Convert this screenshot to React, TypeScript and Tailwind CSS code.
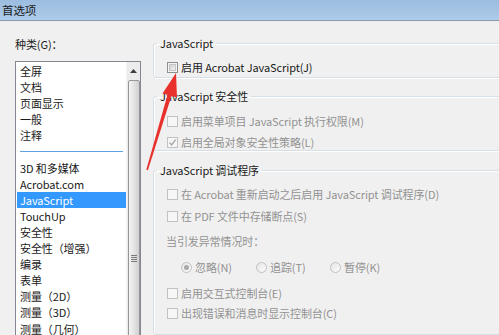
import React from 'react';

const CATEGORIES: (string | null)[] = [
  '全屏',
  '文档',
  '页面显示',
  '一般',
  '注释',
  null,
  '3D 和多媒体',
  'Acrobat.com',
  'JavaScript',
  'TouchUp',
  '安全性',
  '安全性（增强）',
  '编录',
  '表单',
  '测量（2D）',
  '测量（3D）',
  '测量（几何）',
];

function CheckBox({ checked = false, disabled = false }: { checked?: boolean; disabled?: boolean }) {
  return (
    <span
      className={[
        'relative w-[11px] h-[11px] shrink-0 border flex items-center justify-center',
        disabled ? 'border-[#c2c2c2] bg-[#f6f6f6]' : 'border-[#8e8f8f] bg-[#f4f4f4]',
      ].join(' ')}
    >
      {!disabled && (
        <span className="w-[7px] h-[7px] border border-[#c6c6c6] bg-gradient-to-br from-[#cfcfcf] to-[#f3f3f3]" />
      )}
      {checked && (
        <svg viewBox="0 0 9 9" className="absolute w-[9px] h-[9px]">
          <path d="M1.5 4.6 L3.6 7 L7.6 1.6" fill="none" stroke="#a7a7a7" strokeWidth="1.4" />
        </svg>
      )}
    </span>
  );
}

function Radio({ selected = false }: { selected?: boolean }) {
  return (
    <span className="w-[11px] h-[11px] shrink-0 rounded-full border border-[#c0c0c0] bg-gradient-to-br from-[#e6e6e6] to-[#fbfbfb] flex items-center justify-center">
      {selected && <span className="w-[5px] h-[5px] rounded-full bg-[#a9a9a9]" />}
    </span>
  );
}

function CheckRow({
  label,
  checked,
  disabled,
  className = '',
}: {
  label: string;
  checked?: boolean;
  disabled?: boolean;
  className?: string;
}) {
  return (
    <div className={['flex items-center gap-[3px] h-[16px] pl-[13px]', className].join(' ')}>
      <CheckBox checked={checked} disabled={disabled} />
      <span className={['whitespace-nowrap', disabled ? 'text-[#929292]' : 'text-[#1a1a1a]'].join(' ')}>
        {label}
      </span>
    </div>
  );
}

function Group({ title, height, className = '', children }: { title: string; height: string; className?: string; children: React.ReactNode }) {
  return (
    <fieldset
      className={[
        'w-[380px] border border-[#d5dfe5] rounded-[3px] shadow-[inset_1px_1px_0_#ffffff,1px_1px_0_#ffffff]',
        height,
        className,
      ].join(' ')}
    >
      <legend className="ml-[3px] px-[3px] leading-[16px] text-[#1a1a1a]">{title}</legend>
      {children}
    </fieldset>
  );
}

export default function App() {
  return (
    <div className="relative w-[499px] h-[335px] overflow-hidden bg-[#f0f0f0] text-[11px] leading-[16px] tracking-[-0.1px] font-['Noto_Sans_CJK_SC','Microsoft_YaHei',sans-serif] flex flex-col">
      {/* Title bar */}
      <div className="h-[20px] shrink-0 bg-gradient-to-b from-[#9cbddf] to-[#adcbea] flex items-center pl-[2px] text-[#1a1a1a] text-[11.5px]">
        首选项
      </div>
      <div className="h-[2px] shrink-0 border-t border-[#8c9aa8] bg-[#e8edf2]" />

      <div className="flex flex-1 min-h-0">
        {/* Categories */}
        <div className="w-[153px] shrink-0 pl-[15px] flex flex-col">
          <div className="mt-[14px] text-[#1a1a1a]">种类(G)：</div>
          <div className="mt-[9px] w-[126px] flex-1 border border-[#828790] bg-white flex">
            <div className="flex-1 pt-[1px] pl-[1px]">
              {CATEGORIES.map((c, i) =>
                c === null ? (
                  <div key={i} className="h-[16.1px] flex items-center pl-[3px] pr-[3px]">
                    <div className="h-px w-full bg-[#5fa2e4]" />
                  </div>
                ) : (
                  <div
                    key={i}
                    className={[
                      'h-[16.1px] leading-[16px] pl-[3px] whitespace-nowrap',
                      c === 'JavaScript' ? 'bg-[#3399ff] text-white' : 'text-[#1a1a1a]',
                    ].join(' ')}
                  >
                    {c}
                  </div>
                )
              )}
            </div>
            {/* Scrollbar */}
            <div className="w-[14px] shrink-0 bg-[#ececec] border-l border-[#f4f4f4] flex flex-col items-center">
              <div className="h-[17px] w-full flex items-center justify-center">
                <svg viewBox="0 0 7 4" className="w-[7px] h-[4px]">
                  <path d="M0 4 L3.5 0 L7 4 Z" fill="#3f3f3f" />
                </svg>
              </div>
              <div className="mt-[1px] w-[12px] flex-1 rounded-t-[2px] border border-[#979797] bg-gradient-to-r from-[#f4f4f4] via-[#e4e4e4] to-[#cfcfcf] flex flex-col items-center pt-[174px] gap-[1px]">
                <div className="w-[6px] h-px bg-[#7a7a7a]" />
                <div className="w-[6px] h-px bg-[#7a7a7a]" />
                <div className="w-[6px] h-px bg-[#7a7a7a]" />
                <div className="w-[6px] h-px bg-[#7a7a7a]" />
              </div>
            </div>
          </div>
        </div>

        {/* Options */}
        <div className="flex-1 flex flex-col">
          <Group title="JavaScript" height="h-[50px]" className="mt-[13px]">
            <CheckRow label="启用 Acrobat JavaScript(J)" className="mt-[8px]" />
          </Group>

          <Group title="JavaScript 安全性" height="h-[71px]" className="mt-[10px]">
            <CheckRow label="启用菜单项目 JavaScript 执行权限(M)" disabled className="mt-[9px]" />
            <CheckRow label="启用全局对象安全性策略(L)" disabled checked className="mt-[5px]" />
          </Group>

          <Group title="JavaScript 调试程序" height="h-[200px]" className="mt-[11px]">
            <CheckRow label="在 Acrobat 重新启动之后启用 JavaScript 调试程序(D)" disabled className="mt-[8px]" />
            <CheckRow label="在 PDF 文件中存储断点(S)" disabled className="mt-[6px]" />
            <div className="mt-[9px] h-[16px] pl-[12px] text-[#929292] whitespace-nowrap">当引发异常情况时：</div>
            <div className="mt-[10px] h-[16px] pl-[27px] flex items-center text-[#929292]">
              <div className="w-[75px] flex items-center gap-[3px]">
                <Radio selected />
                <span>忽略(N)</span>
              </div>
              <div className="w-[74px] flex items-center gap-[3px]">
                <Radio />
                <span>追踪(T)</span>
              </div>
              <div className="flex items-center gap-[3px]">
                <Radio />
                <span>暂停(K)</span>
              </div>
            </div>
            <CheckRow label="启用交互式控制台(E)" disabled className="mt-[10px]" />
            <CheckRow label="出现错误和消息时显示控制台(C)" disabled className="mt-[4px]" />
          </Group>
        </div>
      </div>

      {/* Red annotation arrow */}
      <svg className="absolute left-0 top-0 w-[499px] h-[335px] pointer-events-none" viewBox="0 0 499 335">
        <polygon points="176,73 162.5,93.5 177,97.5" fill="#e8302c" />
        <polygon points="167.6,94.4 171.6,95.6 147.9,170.3 146.3,169.8" fill="#e8302c" />
      </svg>
    </div>
  );
}
